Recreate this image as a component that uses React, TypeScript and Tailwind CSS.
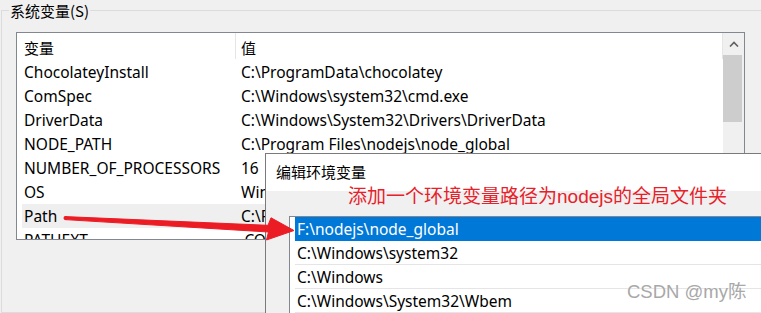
import React from 'react';

const sysVars: [string, string][] = [
  ['ChocolateyInstall', 'C:\\ProgramData\\chocolatey'],
  ['ComSpec', 'C:\\Windows\\system32\\cmd.exe'],
  ['DriverData', 'C:\\Windows\\System32\\Drivers\\DriverData'],
  ['NODE_PATH', 'C:\\Program Files\\nodejs\\node_global'],
  ['NUMBER_OF_PROCESSORS', '16'],
  ['OS', 'Windows_NT'],
  ['Path', 'C:\\Program Files\\Common Files'],
  ['PATHEXT', '.COM;.EXE;.BAT;.CMD;.VBS'],
];

const pathEntries = [
  'F:\\nodejs\\node_global',
  'C:\\Windows\\system32',
  'C:\\Windows',
  'C:\\Windows\\System32\\Wbem',
];

function ScrollBar() {
  return (
    <div className="w-[21px] shrink-0 bg-[#f0f0f0] flex flex-col">
      <div className="h-[22px] flex items-center justify-center">
        <svg width="10" height="6" viewBox="0 0 10 6">
          <path d="M1 5.5 L5 1.5 L9 5.5" fill="none" stroke="#606060" strokeWidth="1.6" />
        </svg>
      </div>
      <div className="h-[67px] w-[19px] bg-[#cdcdcd]" />
    </div>
  );
}

function EditDialog() {
  return (
    <div className="absolute left-[265px] top-[153px] right-0 bottom-0 border-l border-t border-[#7a7a7a] bg-[#f0f0f0] flex flex-col">
      {/* Title bar */}
      <div className="h-[38px] bg-white flex items-center pl-[10px] text-[15px] text-black">
        编辑环境变量
      </div>
      {/* Path list */}
      <div className="mt-[25px] ml-[23px] flex-1 border-l border-t border-[#828790] bg-white pl-[5px]">
        {pathEntries.map((p, i) => (
          <div
            key={p}
            className={`h-[24px] pl-[2px] pt-[2px] whitespace-nowrap leading-[21px] ${
              i === 0 ? 'bg-[#0078d7] text-white' : 'text-black border-b border-[#e5e5e5]'
            }`}
          >
            {p}
          </div>
        ))}
      </div>
    </div>
  );
}

export default function App() {
  return (
    <div className="relative w-[761px] h-[313px] overflow-hidden bg-[#f0f0f0] text-[15.5px] text-black font-['Noto_Sans','Noto_Sans_CJK_SC',sans-serif]">
      {/* Group box: 系统变量 */}
      <div className="relative mt-[10px] ml-[1px] h-[303px] border-l border-t border-b border-[#dcdcdc]">
        <span className="absolute left-[7px] -top-[9px] px-[1px] bg-[#f0f0f0] text-[15px] leading-[17px] font-['Noto_Sans_CJK_SC',sans-serif]">
          系统变量(S)
        </span>

        <div className="mt-[21px] ml-[14px] w-[729px] h-[208px] border border-[#828790] bg-white flex overflow-hidden">
          <div className="flex-1 flex flex-col">
            {/* Header */}
            <div className="h-[27px] flex shrink-0">
              <div className="w-[218px] pl-[7px] pt-[5px] text-[15px] leading-[20px]">变量</div>
              <div className="w-px h-[26px] bg-[#e5e5e5]" />
              <div className="flex-1 pl-[5px] pt-[5px] text-[15px] leading-[20px]">值</div>
              <div className="w-px h-[26px] bg-[#e5e5e5]" />
            </div>
            {/* Rows */}
            {sysVars.map(([name, value]) => (
              <div
                key={name}
                className={`h-[24px] shrink-0 ml-[5px] flex leading-[24px] whitespace-nowrap ${
                  name === 'Path' ? 'bg-[#efefef]' : ''
                }`}
              >
                <div className="w-[214px] pl-[2px]">{name}</div>
                <div className="flex-1 pl-[5px]">{value}</div>
              </div>
            ))}
          </div>
          <ScrollBar />
        </div>
      </div>

      <EditDialog />

      {/* Annotation text */}
      <div className="absolute left-[348px] top-[187px] text-[19px] leading-[20px] text-[#e8202a] whitespace-nowrap font-['Liberation_Sans','Noto_Sans_CJK_SC',sans-serif]">
        添加一个环境变量路径为nodejs的全局文件夹
      </div>

      {/* Red arrow */}
      <svg className="absolute inset-0 pointer-events-none" width="761" height="313" viewBox="0 0 761 313">
        <path
          d="M65 216.6 L268 225.3 L271 217.8 L294 230.5 L266.5 240 L268.5 232 L65 219.6 Z"
          fill="#ec1c24"
          stroke="#ec1c24"
          strokeWidth="1"
          strokeLinejoin="round"
        />
        <circle cx="65.5" cy="218.1" r="2" fill="#ec1c24" />
      </svg>

      {/* Watermark */}
      <div className="absolute left-[627px] top-[280px] text-[18.5px] leading-[24px] text-[#a8a8a8] whitespace-nowrap font-['Liberation_Sans','Noto_Sans_CJK_SC',sans-serif] [text-shadow:0_0_2px_#ffffff]">
        CSDN @my陈
      </div>
    </div>
  );
}
